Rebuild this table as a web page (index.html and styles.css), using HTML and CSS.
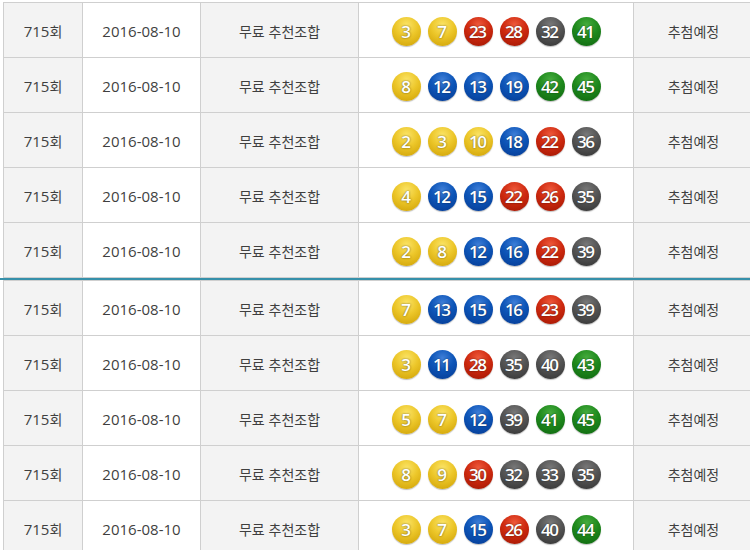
FILE: index.html
```html
<!DOCTYPE html>
<html lang="ko">
<head>
<meta charset="utf-8">
<title>추천조합</title>
<link rel="stylesheet" href="styles.css">
</head>
<body>
<div class="page">
  <div class="block">
    <div class="cell c-gray">715<span class="ko">회</span></div>
    <div class="cell">2016-08-10</div>
    <div class="cell c-gray ko">무료 추천조합</div>
    <div class="cell balls"><span class="ball y">3</span><span class="ball y">7</span><span class="ball r">23</span><span class="ball r">28</span><span class="ball k">32</span><span class="ball g">41</span></div>
    <div class="cell c-gray ko">추첨예정</div>

    <div class="cell c-gray">715<span class="ko">회</span></div>
    <div class="cell">2016-08-10</div>
    <div class="cell c-gray ko">무료 추천조합</div>
    <div class="cell balls"><span class="ball y">8</span><span class="ball b">12</span><span class="ball b">13</span><span class="ball b">19</span><span class="ball g">42</span><span class="ball g">45</span></div>
    <div class="cell c-gray ko">추첨예정</div>

    <div class="cell c-gray">715<span class="ko">회</span></div>
    <div class="cell">2016-08-10</div>
    <div class="cell c-gray ko">무료 추천조합</div>
    <div class="cell balls"><span class="ball y">2</span><span class="ball y">3</span><span class="ball y">10</span><span class="ball b">18</span><span class="ball r">22</span><span class="ball k">36</span></div>
    <div class="cell c-gray ko">추첨예정</div>

    <div class="cell c-gray">715<span class="ko">회</span></div>
    <div class="cell">2016-08-10</div>
    <div class="cell c-gray ko">무료 추천조합</div>
    <div class="cell balls"><span class="ball y">4</span><span class="ball b">12</span><span class="ball b">15</span><span class="ball r">22</span><span class="ball r">26</span><span class="ball k">35</span></div>
    <div class="cell c-gray ko">추첨예정</div>

    <div class="cell c-gray">715<span class="ko">회</span></div>
    <div class="cell">2016-08-10</div>
    <div class="cell c-gray ko">무료 추천조합</div>
    <div class="cell balls"><span class="ball y">2</span><span class="ball y">8</span><span class="ball b">12</span><span class="ball b">16</span><span class="ball r">22</span><span class="ball k">39</span></div>
    <div class="cell c-gray ko">추첨예정</div>
  </div>

  <div class="divider"></div>

  <div class="block">
    <div class="cell c-gray">715<span class="ko">회</span></div>
    <div class="cell">2016-08-10</div>
    <div class="cell c-gray ko">무료 추천조합</div>
    <div class="cell balls"><span class="ball y">7</span><span class="ball b">13</span><span class="ball b">15</span><span class="ball b">16</span><span class="ball r">23</span><span class="ball k">39</span></div>
    <div class="cell c-gray ko">추첨예정</div>

    <div class="cell c-gray">715<span class="ko">회</span></div>
    <div class="cell">2016-08-10</div>
    <div class="cell c-gray ko">무료 추천조합</div>
    <div class="cell balls"><span class="ball y">3</span><span class="ball b">11</span><span class="ball r">28</span><span class="ball k">35</span><span class="ball k">40</span><span class="ball g">43</span></div>
    <div class="cell c-gray ko">추첨예정</div>

    <div class="cell c-gray">715<span class="ko">회</span></div>
    <div class="cell">2016-08-10</div>
    <div class="cell c-gray ko">무료 추천조합</div>
    <div class="cell balls"><span class="ball y">5</span><span class="ball y">7</span><span class="ball b">12</span><span class="ball k">39</span><span class="ball g">41</span><span class="ball g">45</span></div>
    <div class="cell c-gray ko">추첨예정</div>

    <div class="cell c-gray">715<span class="ko">회</span></div>
    <div class="cell">2016-08-10</div>
    <div class="cell c-gray ko">무료 추천조합</div>
    <div class="cell balls"><span class="ball y">8</span><span class="ball y">9</span><span class="ball r">30</span><span class="ball k">32</span><span class="ball k">33</span><span class="ball k">35</span></div>
    <div class="cell c-gray ko">추첨예정</div>

    <div class="cell c-gray">715<span class="ko">회</span></div>
    <div class="cell">2016-08-10</div>
    <div class="cell c-gray ko">무료 추천조합</div>
    <div class="cell balls"><span class="ball y">3</span><span class="ball y">7</span><span class="ball b">15</span><span class="ball r">26</span><span class="ball k">40</span><span class="ball g">44</span></div>
    <div class="cell c-gray ko">추첨예정</div>
  </div>
</div>
</body>
</html>
```

FILE: styles.css
```css
html, body {
  margin: 0;
  padding: 0;
  background: #fff;
  overflow: hidden;
}

.page {
  width: 750px;
  height: 550px;
  overflow: hidden;
  padding-top: 2px;
  box-sizing: border-box;
  font-family: "Open Sans", "Noto Sans CJK KR", sans-serif;
  font-size: 15px;
  color: #3f3f3f;
}

.block {
  display: grid;
  grid-template-columns: 78px 117px 157px 274px 119px;
  grid-auto-rows: 54px;
  gap: 1px;
  padding: 1px;
  margin-left: 3px;
  width: max-content;
  background: #cfcfcf;
}

.divider {
  height: 2px;
  background: #3690aa;
}

.cell {
  background: #fff;
  display: flex;
  align-items: center;
  justify-content: center;
  padding-top: 1px;
  box-sizing: border-box;
}

.c-gray {
  background: #f3f3f3;
}

.ko {
  font-family: "Noto Sans CJK KR", sans-serif;
  font-size: 14px;
}

.balls {
  gap: 7px;
  padding-top: 2px;
}

.ball {
  width: 29px;
  height: 29px;
  border-radius: 50%;
  display: flex;
  align-items: center;
  justify-content: center;
  color: #fff;
  font-family: "Open Sans", sans-serif;
  font-weight: 600;
  font-size: 17px;
  letter-spacing: -1.5px;
  text-indent: -1.5px;
  text-shadow: 0 0 2px rgba(0, 0, 0, 0.6);
  box-shadow: 0 1px 1px rgba(0, 0, 0, 0.25);
}

.ball.y {
  background: radial-gradient(circle at 50% 28%, #fbe466 0%, #ecc629 45%, #d5a90d 85%, #e6c23a 100%);
}

.ball.b {
  background: radial-gradient(circle at 50% 28%, #3f7fd8 0%, #0d55b8 45%, #07409a 85%, #1a57b0 100%);
}

.ball.r {
  background: radial-gradient(circle at 50% 28%, #ef5a3c 0%, #cf2a10 45%, #aa1a05 85%, #c03018 100%);
}

.ball.k {
  background: radial-gradient(circle at 50% 28%, #7a7a7a 0%, #555 45%, #3a3a3a 85%, #505050 100%);
}

.ball.g {
  background: radial-gradient(circle at 50% 28%, #47ad3f 0%, #1f8a1d 45%, #126d12 85%, #2a7f28 100%);
}
```
